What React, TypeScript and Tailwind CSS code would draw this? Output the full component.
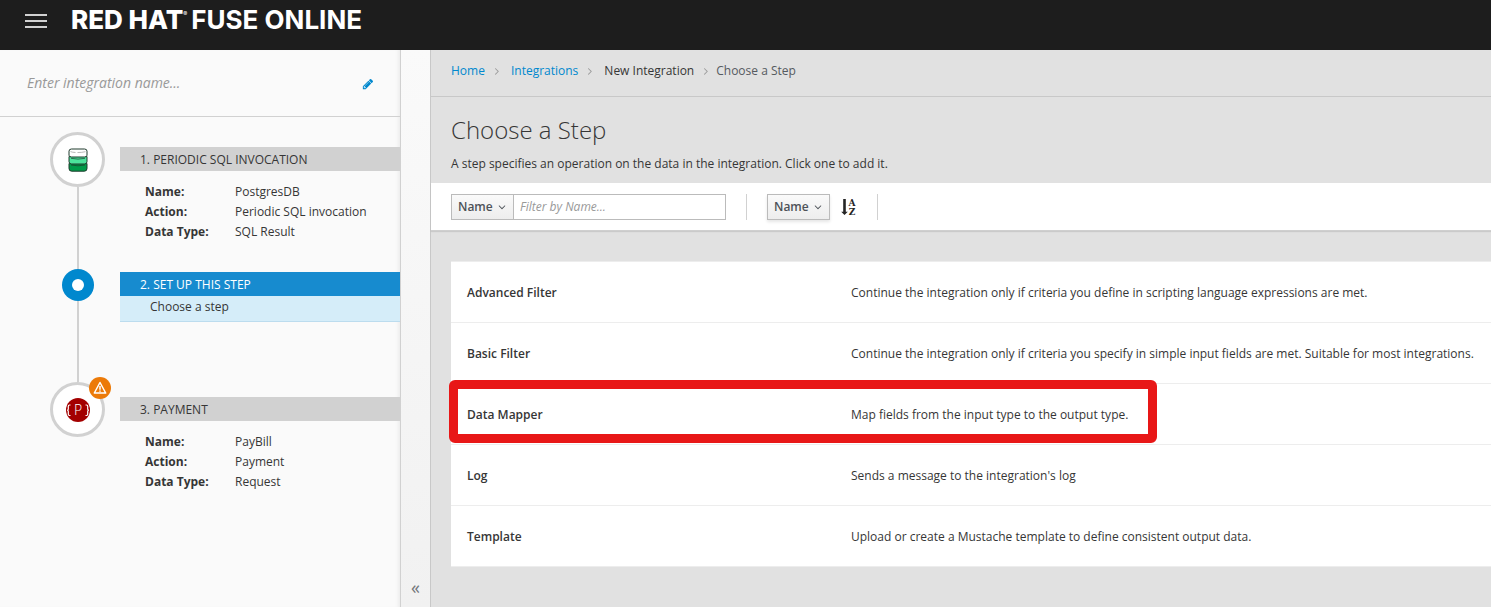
import type { ReactNode } from 'react';

const crumbs = [
  { label: 'Home', href: '#home' },
  { label: 'Integrations', href: '#integrations' },
];

const steps = [
  {
    name: 'Advanced Filter',
    description: 'Continue the integration only if criteria you define in scripting language expressions are met.',
  },
  {
    name: 'Basic Filter',
    description:
      'Continue the integration only if criteria you specify in simple input fields are met. Suitable for most integrations.',
  },
  { name: 'Data Mapper', description: 'Map fields from the input type to the output type.', highlighted: true },
  { name: 'Log', description: "Sends a message to the integration's log" },
  { name: 'Template', description: 'Upload or create a Mustache template to define consistent output data.' },
];

function AngleRight() {
  return (
    <svg viewBox="0 0 1792 1792" className="size-3 fill-[#9c9c9c]" aria-hidden="true">
      <path d="M1171 960q0 13-10 23l-466 466q-10 10-23 10t-23-10l-50-50q-10-10-10-23t10-23l393-393-393-393q-10-10-10-23t10-23l50-50q10-10 23-10t23 10l466 466q10 10 10 23z" />
    </svg>
  );
}

function AngleDown() {
  return (
    <svg
      viewBox="0 0 1792 1792"
      className="pointer-events-none absolute top-1/2 right-1.5 size-3 -translate-y-1/2 fill-[#4d5258]"
      aria-hidden="true"
    >
      <path d="M1395 736q0 13-10 23l-466 466q-10 10-23 10t-23-10l-466-466q-10-10-10-23t10-23l50-50q10-10 23-10t23 10l393 393 393-393q10-10 23-10t23 10l50 50q10 10 10 23z" />
    </svg>
  );
}

function PencilIcon() {
  return (
    <svg viewBox="0 0 1792 1792" className="size-3 fill-[#0088ce]" aria-hidden="true">
      <path d="M491 1536l91-91-235-235-91 91v107h128v128h107zm523-928q0-22-22-22-10 0-17 7l-542 542q-7 7-7 17 0 22 22 22 10 0 17-7l542-542q7-7 7-17zm-54-192l416 416-832 832h-416v-416zm683 96q0 53-37 90l-166 166-416-416 166-165q36-38 90-38 53 0 91 38l235 234q37 39 37 91z" />
    </svg>
  );
}

function SortIcon() {
  return (
    <svg viewBox="0 0 16 18" className="h-[18px] w-4 fill-[#252525]" aria-hidden="true">
      <path d="M2.200 1h2.600v12.800h2L3.500 17 .2 13.800h2z" />
      <text x="11" y="8" textAnchor="middle" fontSize="9" fontWeight="700" fontFamily="DejaVu Serif, serif">
        A
      </text>
      <text x="11" y="17" textAnchor="middle" fontSize="9" fontWeight="700" fontFamily="DejaVu Serif, serif">
        Z
      </text>
    </svg>
  );
}

function DatabaseIcon() {
  return (
    <svg viewBox="0 0 20 24" className="h-6 w-5" stroke="#1f3a2c" strokeWidth="1" aria-hidden="true">
      <path d="M1 15.500h18v5q0 2.700-2.700 2.700H3.700Q1 23.200 1 20.500z" fill="#009a49" />
      <path d="M1 8.500h18v5.200q0 2.300-2.700 2.300H3.700Q1 16 1 13.700z" fill="#4be39b" />
      <path d="M3.500 1h13q2.500 0 2.500 2.200v4q0 1.800-2.500 1.800h-13Q1 9 1 7.200v-4Q1 1 3.500 1z" fill="#fff" />
      <path d="M2.500 3.600q2 .8 5 .9M9.500 4.500q4 .1 8-.8" fill="none" stroke="#888" strokeWidth=".6" />
      <path d="M3 10.300q7 1.600 14 0M3 17q7 1.600 14 0" fill="none" strokeWidth=".7" />
    </svg>
  );
}

function PaymentIcon() {
  return (
    <svg viewBox="0 0 24 24" className="size-6" aria-hidden="true">
      <circle cx="12" cy="12" r="12" fill="#a30000" />
      <text x="12" y="17" textAnchor="middle" fontSize="14" fontWeight="300" fontFamily="Open Sans, sans-serif" fill="#fff">
        P
      </text>
      <path
        d="M4.500 7H3.500q-1.200 0-1.200 1.200v2.700q0 1.300-1.200 1.300 1.200 0 1.200 1.300v2.800q0 1.200 1.200 1.200h1M19.500 7h1q1.200 0 1.200 1.200v2.700q0 1.300 1.200 1.300-1.200 0-1.200 1.300v2.800q0 1.200-1.200 1.200h-1"
        fill="none"
        stroke="#fff"
        strokeWidth="1.200"
      />
    </svg>
  );
}

function StepDetails({ rows }: { rows: [string, string][] }) {
  return (
    <dl className="mt-[11px] grid grid-cols-[90px_1fr] pl-[25px] leading-5">
      {rows.map(([term, value]) => (
        <div key={term} className="contents">
          <dt className="font-bold">{term}:</dt>
          <dd>{value}</dd>
        </div>
      ))}
    </dl>
  );
}

function FlowStep({ marker, children }: { marker: ReactNode; children: ReactNode }) {
  return (
    <li className="flex min-h-[125px] pl-[50px]">
      <div className="flex w-14 shrink-0 flex-col items-center">{marker}</div>
      <div className="ml-3.5 min-w-0 flex-1 pt-[15px]">{children}</div>
    </li>
  );
}

function NameSelect({ label, className = '' }: { label: string; className?: string }) {
  return (
    <div className="relative">
      <select
        aria-label={label}
        className={
          'block h-[26px] w-[63px] appearance-none border border-[#bbb] bg-linear-to-b from-[#fafafa] to-[#ededed] pl-1.5 font-semibold text-[#4d5258] ' +
          className
        }
      >
        <option>Name</option>
      </select>
      <AngleDown />
    </div>
  );
}

export default function App() {
  return (
    <div className="flex min-h-screen flex-col bg-[#e1e1e1] font-['Open_Sans',sans-serif] text-xs text-[#363636]">
      <header className="flex h-[50px] shrink-0 items-start bg-[#1d1d1d] pl-[25px]">
        <button type="button" aria-label="Toggle navigation" className="mt-3.5 flex w-[22px] flex-col gap-1">
          <span className="h-0.5 w-full bg-[#d1d1d1]" />
          <span className="h-0.5 w-full bg-[#d1d1d1]" />
          <span className="h-0.5 w-full bg-[#d1d1d1]" />
        </button>
        <a
          href="#home"
          className="mt-2 ml-6 flex items-start gap-1 font-['Inter',sans-serif] text-[26px] leading-6 whitespace-nowrap text-white"
        >
          <span className="flex font-extrabold">
            RED HAT<span className="text-[6px] leading-3 font-normal">®</span>
          </span>
          <span className="font-bold">FUSE ONLINE</span>
        </a>
      </header>

      <div className="flex flex-1">
        <aside className="w-[401px] shrink-0 border-r border-[#d1d1d1] bg-[#fafafa] shadow-[inset_-4px_0_4px_-3px_rgba(0,0,0,0.08)]">
          <div className="flex h-[67px] items-center border-b border-[#d1d1d1] pr-[26px] pl-[27px]">
            <input
              aria-label="Integration name"
              placeholder="Enter integration name..."
              className="min-w-0 flex-1 bg-transparent text-sm placeholder:text-[#999] placeholder:italic"
            />
            <button type="button" aria-label="Edit integration name" className="pt-0.5">
              <PencilIcon />
            </button>
          </div>

          <ol className="pt-[15px]">
            <FlowStep
              marker={
                <>
                  <span className="flex size-[55px] items-center justify-center self-start rounded-full border-3 border-[#d1d1d1] bg-white">
                    <DatabaseIcon />
                  </span>
                  <span className="w-0.5 flex-1 bg-[#d1d1d1]" />
                </>
              }
            >
              <h2 className="bg-[#d1d1d1] pt-px pl-5 leading-[23px] uppercase">1. Periodic SQL invocation</h2>
              <StepDetails
                rows={[
                  ['Name', 'PostgresDB'],
                  ['Action', 'Periodic SQL invocation'],
                  ['Data Type', 'SQL Result'],
                ]}
              />
            </FlowStep>

            <FlowStep
              marker={
                <>
                  <span className="h-3 w-0.5 bg-[#d1d1d1]" />
                  <span className="flex size-8 items-center justify-center rounded-full bg-[#0088ce]">
                    <span className="size-3 rounded-full bg-white" />
                  </span>
                  <span className="w-0.5 flex-1 bg-[#d1d1d1]" />
                </>
              }
            >
              <h2 className="bg-[#178bcf] pt-px pl-5 leading-[23px] text-white uppercase">2. Set up this step</h2>
              <p className="border-b border-[#bcdcee] bg-[#d5edf9] pt-px pb-1 pl-[30px] leading-5">Choose a step</p>
            </FlowStep>

            <FlowStep
              marker={
                <span className="relative flex size-[55px] items-center justify-center self-start rounded-full border-3 border-[#d1d1d1] bg-white">
                  <PaymentIcon />
                  <span className="absolute -top-2 left-9 flex size-[22px] items-center justify-center rounded-full bg-[#ec7a08]">
                    <svg viewBox="0 0 14 14" className="size-3.5" fill="none" stroke="#fff" aria-label="Warning">
                      <path d="M7 1.500 12.700 12H1.300z" strokeWidth="1.500" strokeLinejoin="round" />
                      <path d="M7 5v3.700M7 9.600v1.200" strokeWidth="1.500" />
                    </svg>
                  </span>
                </span>
              }
            >
              <h2 className="bg-[#d1d1d1] pt-px pl-5 leading-[23px] uppercase">3. Payment</h2>
              <StepDetails
                rows={[
                  ['Name', 'PayBill'],
                  ['Action', 'Payment'],
                  ['Data Type', 'Request'],
                ]}
              />
            </FlowStep>
          </ol>
        </aside>

        <div className="flex w-[30px] shrink-0 flex-col justify-end border-r border-[#c8c8c8] bg-linear-to-b from-[#fafafa] to-[#f1f1f1] pb-2">
          <button type="button" aria-label="Collapse panel" className="text-lg leading-6 text-[#72767b]">
            «
          </button>
        </div>

        <main className="min-w-0 flex-1">
          <nav aria-label="Breadcrumb" className="flex h-[47px] items-center border-b border-[#c8c8c8] pb-1 pl-5">
            <ol className="flex items-center">
              {crumbs.map((crumb) => (
                <li key={crumb.label} className="mr-2 flex items-center gap-1.5">
                  <a href={crumb.href} className="text-[#0088ce]">
                    {crumb.label}
                  </a>
                  <AngleRight />
                </li>
              ))}
              <li className="mr-1 flex items-center gap-1.5">
                New Integration
                <AngleRight />
              </li>
              <li className="text-[#555a60]">Choose a Step</li>
            </ol>
          </nav>

          <div className="px-5 pt-[17px] pb-[9px]">
            <h1 className="text-2xl leading-8 font-light">Choose a Step</h1>
            <p className="mt-2 leading-5">
              A step specifies an operation on the data in the integration. Click one to add it.
            </p>
          </div>

          <div className="flex h-12 items-center border-b border-[#cfcfcf] bg-white pl-5 shadow-[0_1px_1px_rgba(0,0,0,0.1)]">
            <div className="flex">
              <NameSelect label="Filter field" />
              <input
                aria-label="Filter by Name"
                placeholder="Filter by Name..."
                className="h-[26px] w-[212px] border border-l-0 border-[#bbb] bg-white px-1.5 placeholder:text-[#999] placeholder:italic"
              />
            </div>
            <div className="ml-5 flex h-[26px] items-center border-x border-[#d1d1d1] px-5">
              <NameSelect label="Sort field" className="shadow-[0_2px_3px_rgba(3,3,3,0.1)]" />
              <button type="button" aria-label="Sort ascending" className="ml-[11px]">
                <SortIcon />
              </button>
            </div>
          </div>

          <ul className="mt-[30px] mb-10 ml-5 border-b border-[#ededed] bg-white">
            {steps.map((step) => (
              <li key={step.name} className="relative border-t border-[#ededed]">
                <a href="#step" className="grid grid-cols-[384px_1fr] pt-[21px] pb-[19px] pl-4 leading-5">
                  <span className="font-semibold">{step.name}</span>
                  <span>{step.description}</span>
                </a>
                {step.highlighted && (
                  <span className="pointer-events-none absolute -top-1 -left-0.5 h-[63px] w-[708px] rounded-md border-9 border-[#e81717]" />
                )}
              </li>
            ))}
          </ul>
        </main>
      </div>
    </div>
  );
}
